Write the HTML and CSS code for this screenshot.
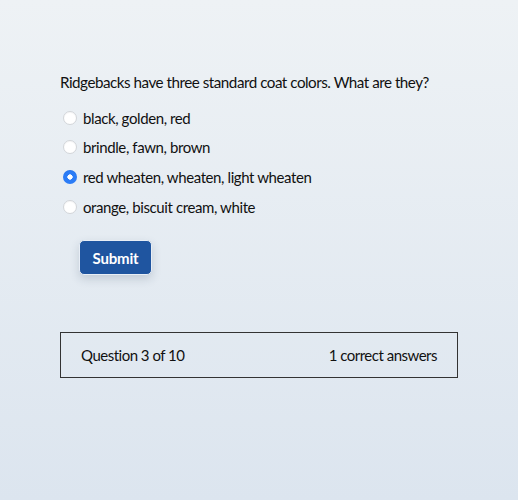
FILE: index.html
```html
<!DOCTYPE html>
<html>
<head>
<meta charset="utf-8">
<link rel="stylesheet" href="styles.css">
</head>
<body>
<main class="quiz">
  <p class="question">Ridgebacks have three standard coat colors. What are they?</p>
  <form class="options">
    <label class="option"><input type="radio" name="a"><span>black, golden, red</span></label>
    <label class="option"><input type="radio" name="a"><span>brindle, fawn, brown</span></label>
    <label class="option"><input type="radio" name="a" checked><span>red wheaten, wheaten, light wheaten</span></label>
    <label class="option"><input type="radio" name="a"><span>orange, biscuit cream, white</span></label>
    <button type="button" class="submit">Submit</button>
  </form>
  <div class="status">
    <span>Question 3 of 10</span>
    <span>1 correct answers</span>
  </div>
</main>
</body>
</html>
```
FILE: styles.css
```css
html, body {
  margin: 0;
  height: 100%;
}
body {
  background: linear-gradient(180deg, #eef2f5 0%, #dce5ef 100%);
  font-family: Lato, "Open Sans", sans-serif;
  color: #111;
  font-size: 15px;
  letter-spacing: -0.4px;
}
.quiz {
  width: 398px;
  margin: 0 auto;
  padding-top: 72px;
}
.question {
  margin: 0 0 11px;
  font-size: 15.2px;
  letter-spacing: -0.48px;
  line-height: 20px;
}
.options {
  display: flex;
  flex-direction: column;
  align-items: flex-start;
}
.option {
  display: flex;
  align-items: center;
  height: 29.6px;
}
.option input {
  appearance: none;
  -webkit-appearance: none;
  box-sizing: border-box;
  width: 14px;
  height: 14px;
  margin: 0 6px 0 3px;
  border-radius: 50%;
  background: #fff;
  border: 1px solid #d2d5d9;
  box-shadow: inset 0 1px 1px rgba(0, 0, 0, 0.04);
}
.option input:checked {
  border: none;
  background: radial-gradient(circle, #fff 0 2.4px, #2b7cf6 2.9px);
}
.submit {
  margin: 19px 0 0 19px;
  width: 73px;
  height: 35px;
  border: 1px solid #e8eef6;
  border-radius: 5px;
  background: #1f55a0;
  color: #fff;
  font-family: Lato, sans-serif;
  font-weight: 700;
  font-size: 15px;
  letter-spacing: -0.2px;
  box-shadow: 0 4px 10px rgba(40, 60, 90, 0.18);
}
.status {
  margin-top: 57px;
  height: 44px;
  border: 1px solid #333;
  display: flex;
  align-items: center;
  justify-content: space-between;
  padding: 0 20px;
  letter-spacing: -0.5px;
}
```
